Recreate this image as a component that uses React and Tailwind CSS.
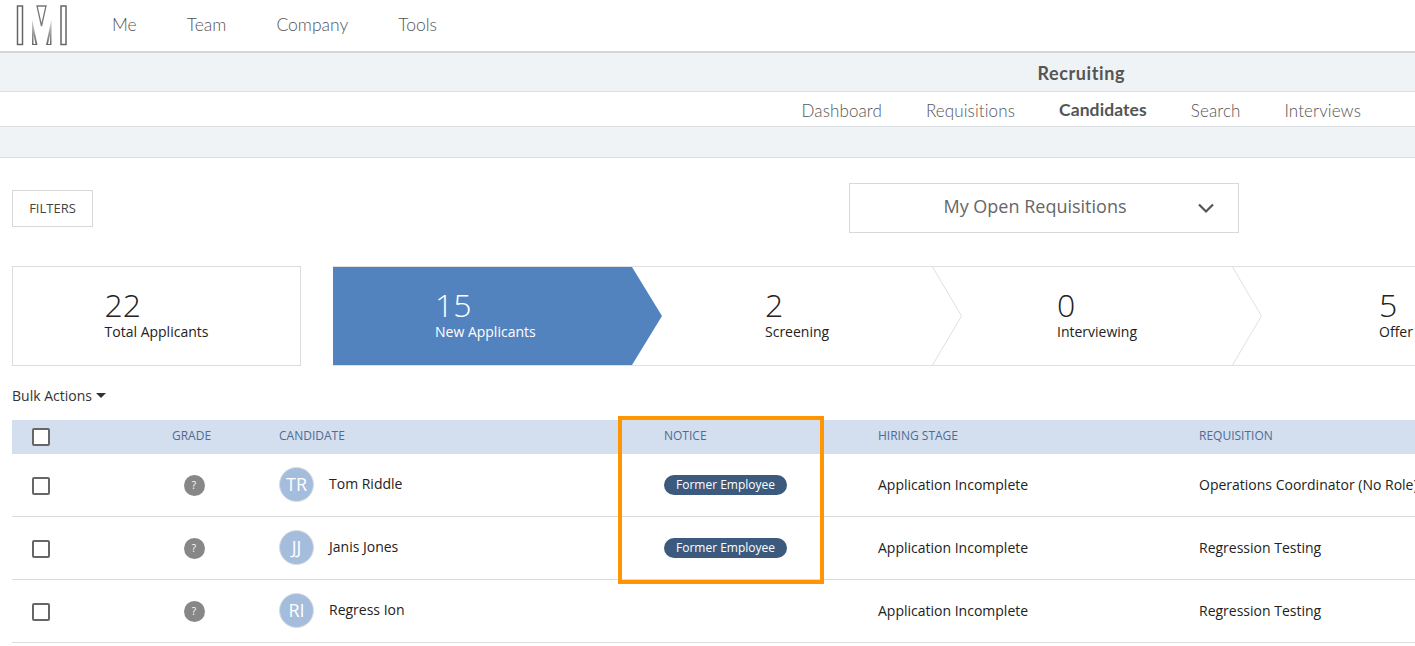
import React from 'react';

const font = { fontFamily: '"Open Sans", sans-serif' };
const navFont = { fontFamily: 'Lato, sans-serif' };

const rows = [
  { initials: 'TR', name: 'Tom Riddle', notice: true, requisition: 'Operations Coordinator (No Role)' },
  { initials: 'JJ', name: 'Janis Jones', notice: true, requisition: 'Regression Testing' },
  { initials: 'RI', name: 'Regress Ion', notice: false, requisition: 'Regression Testing' },
];

const stages = [
  { count: '2', label: 'Screening' },
  { count: '0', label: 'Interviewing' },
  { count: '5', label: 'Offer' },
];

const gridCols = 'grid grid-cols-[120px_120px_412px_214px_321px_1fr] items-center';

const Logo = () => (
  <svg width="54" height="42" viewBox="0 0 54 42" className="ml-[15px] shrink-0">
    <defs>
      <linearGradient id="leg" x1="0" y1="0" x2="0" y2="1">
        <stop offset="0" stopColor="#ddd" />
        <stop offset="1" stopColor="#666" />
      </linearGradient>
    </defs>
    <rect x="2.5" y="1" width="5" height="38.5" fill="none" stroke="#666" strokeWidth="1.5" />
    <rect x="46" y="1" width="5" height="38.5" fill="none" stroke="#666" strokeWidth="1.5" />
    <polygon points="22,1 31,1 26.5,21" fill="none" stroke="#777" strokeWidth="1.3" />
    <polygon points="17,14 22.5,40 17,40" fill="url(#leg)" />
    <polygon points="36.5,14 31,40 36.5,40" fill="url(#leg)" />
    <polygon points="18.5,30 20.5,39 18.5,39" fill="#fff" />
    <polygon points="35,30 33,39 35,39" fill="#fff" />
  </svg>
);

const Checkbox = ({ className }) => (
  <div className={`w-[18px] h-[18px] border-2 border-[#666] rounded-[2px] bg-white ml-5 ${className || ''}`} />
);

const Chevron = ({ filled }) => (
  <svg width="31" height="100" viewBox="0 0 31 100" className="absolute left-full top-[-1px] z-10">
    <polygon points="0,1 30,50 0,99" fill={filled ? '#5383bf' : 'white'} />
    {!filled && <polyline points="0,0 29.5,50 0,100" fill="none" stroke="#e0e0e0" />}
  </svg>
);

const Stat = ({ count, label }) => (
  <div className="pb-[2px]">
    <div className="text-[32px] leading-[34px] font-light">{count}</div>
    <div className="text-[14px] leading-[20px]">{label}</div>
  </div>
);

export default function App() {
  return (
    <div className="relative w-[1415px] h-[646px] overflow-hidden bg-white text-[#222]" style={font}>
      {/* top nav */}
      <header className="flex items-center h-[53px] border-b-2 border-[#d5d6d8]">
        <Logo />
        <nav className="flex gap-[50px] ml-[43px] text-[17.5px] font-light text-[#555]" style={navFont}>
          <span>Me</span>
          <span>Team</span>
          <span>Company</span>
          <span>Tools</span>
        </nav>
      </header>

      {/* recruiting sub nav */}
      <div className="h-[39px] bg-[#eff3f6] border-b border-[#dcdfe2] flex items-center justify-end pr-[290px] pt-[2px] text-[18px] tracking-[0.6px] font-bold text-[#555]" style={navFont}>
        Recruiting
      </div>
      <div className="h-[35px] border-b border-[#dcdfe2] flex items-center justify-end gap-[44px] pr-[54px] pt-[3px] text-[17px] tracking-[0.1px] font-light text-[#555]" style={navFont}>
        <span>Dashboard</span>
        <span>Requisitions</span>
        <span className="font-bold text-[17.5px]">Candidates</span>
        <span>Search</span>
        <span>Interviews</span>
      </div>
      <div className="h-[31px] bg-[#eff3f6] border-b border-[#dcdfe2]" />

      {/* filters and requisition picker */}
      <div className="flex items-center h-[50px] mt-[25px] pl-3">
        <button className="w-[81px] h-[37px] border border-[#d8d8d8] text-[13px] text-[#444] mt-[1px]">FILTERS</button>
        <div className="relative flex items-center justify-center ml-[756px] w-[390px] h-[50px] border border-[#d8d8d8] text-[18px] text-[#666] pr-[18px] pb-[4px]">
          My Open Requisitions
          <svg width="18" height="11" viewBox="0 0 18 11" className="absolute right-[23px] top-[19px]">
            <polyline points="2,1.5 9,8.5 16,1.5" fill="none" stroke="#555" strokeWidth="2.2" />
          </svg>
        </div>
      </div>

      {/* funnel */}
      <div className="flex mt-[33px] pl-3 h-[100px]">
        <div className="w-[289px] shrink-0 border border-[#dcdcdc] flex items-center justify-center">
          <Stat count="22" label="Total Applicants" />
        </div>
        <div className="flex ml-[32px] border-y border-[#e0e0e0] grow">
          <div className="relative w-[299px] shrink-0 bg-[#5383bf] text-white flex items-center pl-[102px]">
            <Stat count="15" label="New Applicants" />
            <Chevron filled />
          </div>
          {stages.map((s, i) => (
            <div key={s.label} className={`relative w-[300px] shrink-0 flex items-center ${i === 0 ? 'pl-[133px]' : i === 1 ? 'pl-[125px]' : 'pl-[147px]'}`}>
              <Stat count={s.count} label={s.label} />
              {i < 2 && <Chevron />}
            </div>
          ))}
        </div>
      </div>

      {/* bulk actions */}
      <div className="flex items-center h-[20px] mt-[19px] pl-3 text-[14px] text-[#333]">
        Bulk Actions
        <span className="ml-[4px] mt-[1px] border-x-[5px] border-x-transparent border-t-[5px] border-t-[#333]" />
      </div>

      {/* table */}
      <div className="ml-3 mt-[15px]">
        <div className={`${gridCols} h-[34px] bg-[#d3dfef] text-[12px] text-[#4f6b94]`}>
          <Checkbox />
          <div className="text-center pr-[1px] pb-[2px]">GRADE</div>
          <div className="pl-[27px] pb-[2px]">CANDIDATE</div>
          <div className="pb-[2px]">NOTICE</div>
          <div className="pb-[2px]">HIRING STAGE</div>
          <div className="pb-[2px]">REQUISITION</div>
        </div>
        {rows.map((r) => (
          <div key={r.name} className={`${gridCols} h-[63px] border-b border-[#dcdcdc] text-[14px] whitespace-nowrap`}>
            <Checkbox className="mt-[2px]" />
            <div className="flex justify-center pl-[4px]">
              <div className="w-[21px] h-[21px] rounded-full bg-[#878787] text-white text-[10px] flex items-center justify-center">?</div>
            </div>
            <div className="flex items-center pl-[27px] gap-[15px] -mt-[1px]">
              <div className="w-[35px] h-[35px] rounded-full bg-[#a4bddc] border border-[#d8dde3] text-white text-[18px] flex items-center justify-center">{r.initials}</div>
              <span className="-mt-[2px]">{r.name}</span>
            </div>
            <div className="pb-[2px]">
              {r.notice && (
                <span className="inline-flex items-center h-[20px] px-3 rounded-full bg-[#3b5a7e] text-white text-[12px]">Former Employee</span>
              )}
            </div>
            <div className="pb-[2px]">Application Incomplete</div>
            <div className="pb-[2px]">{r.requisition}</div>
          </div>
        ))}
      </div>

      {/* annotation box */}
      <div className="absolute left-[618px] top-[416px] w-[206px] h-[168px] border-[4px] border-[#ff9500]" />
    </div>
  );
}
